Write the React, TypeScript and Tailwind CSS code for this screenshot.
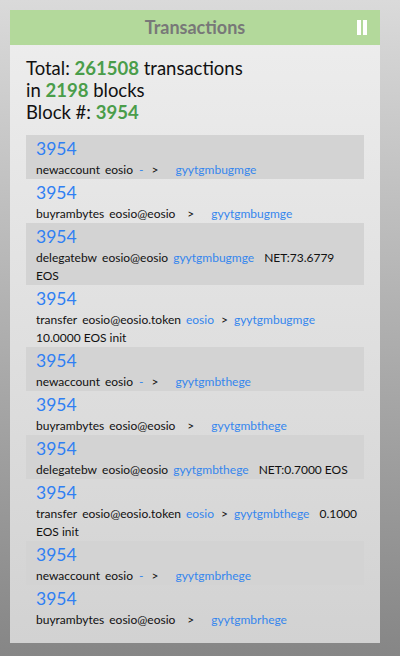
import React from 'react';

type Part = { t: string; blue?: boolean; cls?: string };
type Tx = { parts: Part[]; tail?: string };

const txs: Tx[] = [
  {
    parts: [
      { t: 'newaccount' },
      { t: 'eosio', cls: 'ml-[5px]' },
      { t: '-', blue: true, cls: 'ml-[6px]' },
      { t: '>', cls: 'ml-[8px]' },
      { t: 'gyytgmbugmge', blue: true, cls: 'ml-[17px]' },
    ],
  },
  {
    parts: [
      { t: 'buyrambytes' },
      { t: 'eosio@eosio', cls: 'ml-[5px]' },
      { t: '>', cls: 'ml-[12px]' },
      { t: 'gyytgmbugmge', blue: true, cls: 'ml-[17px]' },
    ],
  },
  {
    parts: [
      { t: 'delegatebw' },
      { t: 'eosio@eosio', cls: 'ml-[5px]' },
      { t: 'gyytgmbugmge', blue: true, cls: 'ml-[5px]' },
      { t: 'NET:73.6779', cls: 'ml-[10px]' },
    ],
    tail: 'EOS',
  },
  {
    parts: [
      { t: 'transfer' },
      { t: 'eosio@eosio.token', cls: 'ml-[5px]' },
      { t: 'eosio', blue: true, cls: 'ml-[5px]' },
      { t: '>', cls: 'ml-[7px]' },
      { t: 'gyytgmbugmge', blue: true, cls: 'ml-[6px]' },
    ],
    tail: '10.0000 EOS init',
  },
  {
    parts: [
      { t: 'newaccount' },
      { t: 'eosio', cls: 'ml-[5px]' },
      { t: '-', blue: true, cls: 'ml-[6px]' },
      { t: '>', cls: 'ml-[8px]' },
      { t: 'gyytgmbthege', blue: true, cls: 'ml-[17px]' },
    ],
  },
  {
    parts: [
      { t: 'buyrambytes' },
      { t: 'eosio@eosio', cls: 'ml-[5px]' },
      { t: '>', cls: 'ml-[12px]' },
      { t: 'gyytgmbthege', blue: true, cls: 'ml-[17px]' },
    ],
  },
  {
    parts: [
      { t: 'delegatebw' },
      { t: 'eosio@eosio', cls: 'ml-[5px]' },
      { t: 'gyytgmbthege', blue: true, cls: 'ml-[5px]' },
      { t: 'NET:0.7000 EOS', cls: 'ml-[10px]' },
    ],
  },
  {
    parts: [
      { t: 'transfer' },
      { t: 'eosio@eosio.token', cls: 'ml-[5px]' },
      { t: 'eosio', blue: true, cls: 'ml-[5px]' },
      { t: '>', cls: 'ml-[7px]' },
      { t: 'gyytgmbthege', blue: true, cls: 'ml-[6px]' },
      { t: '0.1000', cls: 'ml-[10px]' },
    ],
    tail: 'EOS init',
  },
  {
    parts: [
      { t: 'newaccount' },
      { t: 'eosio', cls: 'ml-[5px]' },
      { t: '-', blue: true, cls: 'ml-[6px]' },
      { t: '>', cls: 'ml-[8px]' },
      { t: 'gyytgmbrhege', blue: true, cls: 'ml-[17px]' },
    ],
  },
  {
    parts: [
      { t: 'buyrambytes' },
      { t: 'eosio@eosio', cls: 'ml-[5px]' },
      { t: '>', cls: 'ml-[12px]' },
      { t: 'gyytgmbrhege', blue: true, cls: 'ml-[17px]' },
    ],
  },
];

export default function App() {
  return (
    <div
      className="w-[400px] h-[656px] pl-[10px] pr-[20px] pt-[10px] pb-[13px] bg-gradient-to-b from-[#dadada] to-[#868686] overflow-hidden"
      style={{ fontFamily: 'Lato, "Noto Sans", sans-serif' }}
    >
      <div className="h-full flex flex-col bg-gradient-to-b from-[#eeeeee] to-[#d2d2d2]">
        <header className="relative h-[35px] bg-[#b3d99b] flex items-center justify-center">
          <h1 className="text-[18px] font-bold text-[#787878]">Transactions</h1>
          <div className="absolute right-[13px] top-[10px] flex gap-[2px]">
            <span className="w-[4px] h-[15px] bg-white" />
            <span className="w-[4px] h-[15px] bg-white" />
          </div>
        </header>

        <div className="px-4 pt-[12px] text-[18.5px] leading-[22px] text-[#111]">
          <div>
            Total: <b className="text-[#4a9d4a]">261508</b> transactions
          </div>
          <div>
            in <b className="text-[#4a9d4a]">2198</b> blocks
          </div>
          <div>
            Block #: <b className="text-[#4a9d4a]">3954</b>
          </div>
        </div>

        <ul className="mx-4 mt-[12px]">
          {txs.map((tx, i) => (
            <li
              key={i}
              className={`px-[10px] pt-[2px] ${i % 2 === 0 ? 'bg-[#d3d3d3]' : ''}`}
            >
              <div className="text-[17.5px] leading-[24px] text-[#2f7ff3]">3954</div>
              <div className="text-[12px] leading-[18px] text-[#111]">
                {tx.parts.map((p, j) => (
                  <span key={j} className={`${p.cls ?? ''} ${p.blue ? 'text-[#3586ee]' : ''}`}>
                    {p.t}
                  </span>
                ))}
              </div>
              {tx.tail && (
                <div className="text-[12px] leading-[18px] text-[#111]">{tx.tail}</div>
              )}
            </li>
          ))}
        </ul>
      </div>
    </div>
  );
}
